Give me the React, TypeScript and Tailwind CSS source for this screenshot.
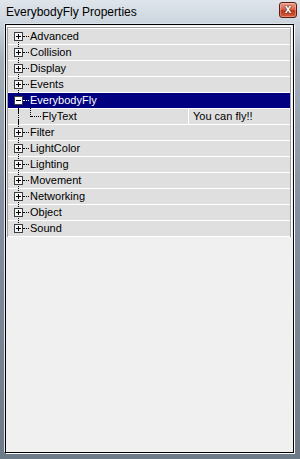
import React from 'react';

const cats = ['Advanced', 'Collision', 'Display', 'Events', 'EverybodyFly', 'Filter', 'LightColor', 'Lighting', 'Movement', 'Networking', 'Object', 'Sound'];

type Row = { name: string; kind: 'cat' | 'prop'; open?: boolean; value?: string };

const rows: Row[] = [];
cats.forEach((c) => {
  rows.push({ name: c, kind: 'cat', open: c === 'EverybodyFly' });
  if (c === 'EverybodyFly') rows.push({ name: 'FlyText', kind: 'prop', value: 'You can fly!!' });
});

function Expander({ open, selected }: { open?: boolean; selected?: boolean }) {
  return (
    <div className={`relative w-[9px] h-[9px] border border-[#3c3c3c] ${selected ? 'bg-white' : 'bg-[#f4f4f4]'}`}>
      <div className="absolute left-[1px] top-[3px] w-[5px] h-[1px] bg-black" />
      {!open && <div className="absolute left-[3px] top-[1px] w-[1px] h-[5px] bg-black" />}
    </div>
  );
}

export default function App() {
  const lastCat = rows.length - 1;
  return (
    <div
      className="relative w-[300px] h-[459px] overflow-hidden"
      style={{ fontFamily: '"Liberation Sans", Arial, sans-serif' }}
    >
      <div className="absolute inset-0 bg-[linear-gradient(180deg,#dfe5eb_0px,#cdd6df_22px,#a4afba_60px,#8491a0_200px,#6d7a88_459px)]" />
      <div className="relative flex flex-col h-full">
        {/* title bar */}
        <div className="h-[24px] flex items-center justify-between pl-[6px] pr-[3px]">
          <span className="text-[12px] text-black leading-none pb-[1px]">EverybodyFly Properties</span>
          <div className="w-[18px] h-[16px] mb-[4px] rounded-[3px] border border-[#5e1d12] bg-[linear-gradient(180deg,#e99a86_0%,#d8664a_45%,#c0341a_55%,#d3603f_100%)] flex items-center justify-center shadow-[inset_0_0_0_1px_rgba(255,255,255,0.3)]">
            <span className="text-white text-[12px] font-bold leading-none pb-[2px] [text-shadow:0_0_1px_#3a0d05,0_0_1px_#3a0d05]">x</span>
          </div>
        </div>

        {/* client area */}
        <div className="ml-[5px] mr-[6px] mb-[6px] flex-1 border border-black bg-[#f0f0f0] shadow-[1px_1px_0_#ffffff,-1px_-1px_0_#dfe4e9] p-[1px] flex flex-col">
          <div className="bg-white pt-[1px] pr-[1px]">
            <div className="border-l border-r border-t border-[#a0a0a0] bg-white pt-[1px]">
              {rows.map((r, i) => {
                const sel = r.name === 'EverybodyFly';
                const first = i === 0;
                const last = i === lastCat;
                return (
                  <div
                    key={r.name}
                    className={`relative flex h-[16px] border-b border-white ${sel ? 'bg-[#000080] text-white' : 'bg-[#dfdfdf] text-black'} text-[11px]`}
                  >
                    {/* tree trunk */}
                    {!first && <div className="absolute left-[10px] top-[-1px] h-[5px] border-l border-dotted border-black" />}
                    {!last && <div className="absolute left-[10px] top-[11px] h-[5px] border-l border-dotted border-black" />}
                    {r.kind === 'cat' ? (
                      <>
                        <div className="absolute left-[6px] top-[3px]">
                          <Expander open={r.open} selected={sel} />
                        </div>
                        <div className={`absolute left-[15px] top-[7px] w-[6px] border-t border-dotted ${sel ? 'border-white' : 'border-black'}`} />
                        <span className="pl-[22px] leading-[15px]">{r.name}</span>
                      </>
                    ) : (
                      <>
                        <div className="absolute left-[10px] top-[-1px] h-[16px] border-l border-dotted border-black" />
                        <div className="absolute left-[22px] top-[-1px] h-[9px] border-l border-dotted border-black" />
                        <div className="absolute left-[23px] top-[7px] w-[10px] border-t border-dotted border-black" />
                        <span className="pl-[34px] leading-[15px] w-[181px] border-r border-white">{r.name}</span>
                        <span className="pl-[4px] leading-[15px]">{r.value}</span>
                      </>
                    )}
                  </div>
                );
              })}
            </div>
          </div>
          <div className="flex-1 bg-[#f0f0f0]" />
        </div>
      </div>
    </div>
  );
}
